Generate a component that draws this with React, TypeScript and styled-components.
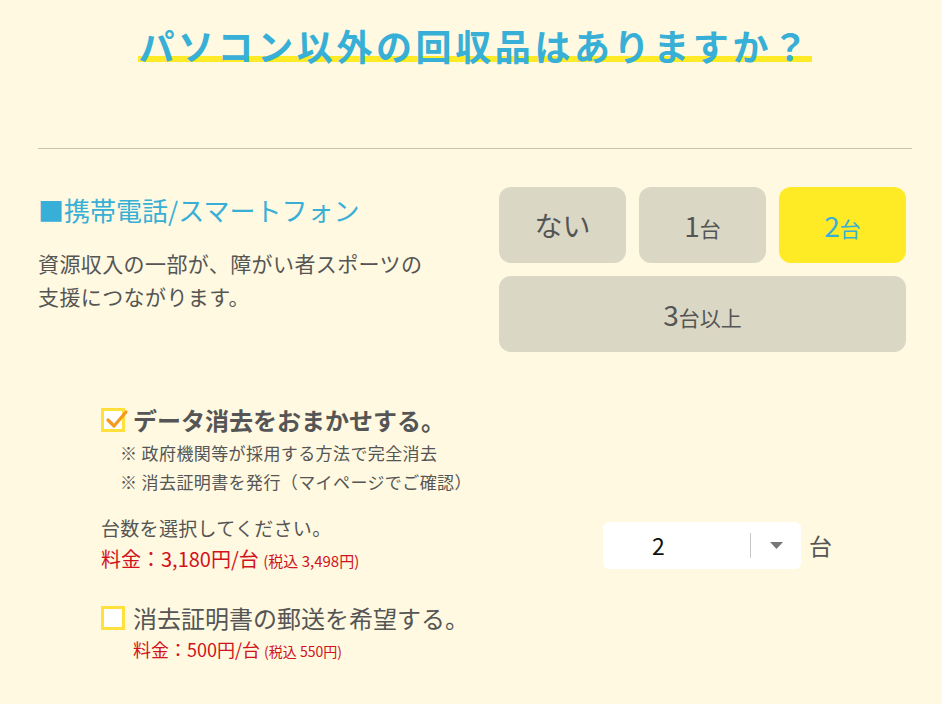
import { useState } from 'react'
import styled, { createGlobalStyle } from 'styled-components'

const colors = {
  bg: '#fef9e0',
  text: '#555555',
  blue: '#38afd6',
  yellow: '#ffea26',
  box: '#dad8c5',
  line: '#c9c4ab',
  red: '#d2121c',
  check: '#f39a1e',
  boxBorder: '#ffe03c',
}

const GlobalStyle = createGlobalStyle`
  html, body {
    margin: 0;
    padding: 0;
    background: ${colors.bg};
    font-family: "Noto Sans CJK JP", "Noto Sans", sans-serif;
    color: ${colors.text};
  }
`

const Page = styled.div`
  padding: 0 30px 0 38px;
  width: 874px;
`

const TitleBar = styled.div`
  height: 149px;
  box-sizing: border-box;
  padding-top: 22px;
  border-bottom: 1px solid ${colors.line};
  text-align: center;
`

const Title = styled.h1`
  display: inline-block;
  margin: 0;
  font-size: 36px;
  line-height: 46px;
  font-weight: 700;
  letter-spacing: 3.6px;
  color: ${colors.blue};
  background: linear-gradient(${colors.yellow}, ${colors.yellow}) no-repeat;
  background-size: 100% 6px;
  background-position: 0 calc(100% - 6px);
`

const Section = styled.div`
  display: flex;
  justify-content: space-between;
  padding: 38px 5px 0 0;
`

const Info = styled.div`
  display: flex;
  flex-direction: column;
`

const Heading = styled.h2`
  margin: 0;
  padding-top: 5px;
  font-size: 26px;
  line-height: 36px;
  font-weight: 400;
  color: ${colors.blue};
`

const Desc = styled.p`
  margin: 19px 0 0;
  font-size: 21px;
  line-height: 33px;
  letter-spacing: 0.4px;
`

const Choices = styled.div`
  display: grid;
  grid-template-columns: repeat(3, 127px);
  grid-auto-rows: 76px;
  column-gap: 13px;
  row-gap: 13px;
  width: 408px;
`

const Choice = styled.button<{ $selected?: boolean; $wide?: boolean }>`
  grid-column: ${({ $wide }) => ($wide ? '1 / -1' : 'auto')};
  border: none;
  border-radius: 12px;
  background: ${({ $selected }) => ($selected ? colors.yellow : colors.box)};
  color: ${({ $selected }) => ($selected ? colors.blue : colors.text)};
  font-family: inherit;
  font-size: 28px;
  cursor: pointer;
  display: flex;
  align-items: center;
  justify-content: center;
`

const Unit = styled.span`
  font-size: 21px;
  margin-top: 5px;
`

const Options = styled.div`
  display: flex;
  flex-direction: column;
  padding: 52px 0 0 63px;
`

const CheckRow = styled.label`
  display: flex;
  align-items: center;
  gap: 8px;
  cursor: pointer;
`

const Box = styled.span`
  position: relative;
  width: 24px;
  height: 24px;
  box-sizing: border-box;
  border: 3px solid ${colors.boxBorder};
  background: #fff;
  flex-shrink: 0;
`

const Tick = styled.svg`
  position: absolute;
  left: 1px;
  top: -4px;
`

const CheckLabel = styled.span<{ $bold?: boolean }>`
  font-size: 24px;
  line-height: 32px;
  font-weight: ${({ $bold }) => ($bold ? 700 : 400)};
`

const Notes = styled.ul`
  list-style: none;
  margin: 2px 0 0 19px;
  padding: 0;
  font-size: 17px;
  line-height: 29px;
  letter-spacing: 0.4px;
`

const CountRow = styled.div`
  display: flex;
  align-items: center;
  margin-top: 17px;
  width: 731px;
`

const CountText = styled.div`
  flex: 1;
`

const Prompt = styled.div`
  font-size: 19px;
  line-height: 30px;
  letter-spacing: 0.3px;
`

const Price = styled.div<{ $small?: boolean }>`
  color: ${colors.red};
  font-size: ${({ $small }) => ($small ? '18px' : '20px')};
  line-height: ${({ $small }) => ($small ? '30px' : '32px')};
`

const Tax = styled.span<{ $small?: boolean }>`
  font-size: ${({ $small }) => ($small ? '14px' : '15px')};
`

const SelectBox = styled.div`
  display: flex;
  align-items: center;
  width: 198px;
  height: 47px;
  background: #fff;
  border-radius: 6px;
`

const SelectValue = styled.span`
  flex: 1;
  padding-left: 49px;
  font-size: 23px;
  color: #111;
`

const SelectArrow = styled.span`
  display: flex;
  align-items: center;
  justify-content: center;
  width: 50px;
  height: 25px;
  border-left: 1px solid #c8c8c8;
`

const After = styled.span`
  font-size: 23px;
  margin-left: 8px;
`

const SecondRow = styled.div`
  margin-top: 25px;
  display: flex;
  flex-direction: column;
`

const SubPrice = styled.div`
  padding-left: 32px;
`

export default function App() {
  const [selected, setSelected] = useState(2)
  return (
    <Page>
      <GlobalStyle />
      <TitleBar>
        <Title>パソコン以外の回収品はありますか？</Title>
      </TitleBar>
      <Section>
        <Info>
          <Heading>■携帯電話/スマートフォン</Heading>
          <Desc>
            資源収入の一部が、障がい者スポーツの
            <br />
            支援につながります。
          </Desc>
        </Info>
        <Choices>
          <Choice $selected={selected === 0} onClick={() => setSelected(0)}>ない</Choice>
          <Choice $selected={selected === 1} onClick={() => setSelected(1)}>1<Unit>台</Unit></Choice>
          <Choice $selected={selected === 2} onClick={() => setSelected(2)}>2<Unit>台</Unit></Choice>
          <Choice $wide $selected={selected === 3} onClick={() => setSelected(3)}>3<Unit>台以上</Unit></Choice>
        </Choices>
      </Section>
      <Options>
        <CheckRow>
          <Box>
            <Tick width="24" height="24" viewBox="0 0 24 24">
              <path d="M3 13 L9 19 L21 5" fill="none" stroke={colors.check} strokeWidth="3.2" strokeLinecap="round" strokeLinejoin="round" />
            </Tick>
          </Box>
          <CheckLabel $bold>データ消去をおまかせする。</CheckLabel>
        </CheckRow>
        <Notes>
          <li>※ 政府機関等が採用する方法で完全消去</li>
          <li>※ 消去証明書を発行（マイページでご確認）</li>
        </Notes>
        <CountRow>
          <CountText>
            <Prompt>台数を選択してください。</Prompt>
            <Price>料金：3,180円/台 <Tax>(税込 3,498円)</Tax></Price>
          </CountText>
          <SelectBox>
            <SelectValue>{selected}</SelectValue>
            <SelectArrow>
              <svg width="13" height="7" viewBox="0 0 13 7">
                <path d="M0 0 H13 L6.5 7 Z" fill="#777" />
              </svg>
            </SelectArrow>
          </SelectBox>
          <After>台</After>
        </CountRow>
        <SecondRow>
          <CheckRow>
            <Box />
            <CheckLabel>消去証明書の郵送を希望する。</CheckLabel>
          </CheckRow>
          <SubPrice>
            <Price $small>料金：500円/台 <Tax $small>(税込 550円)</Tax></Price>
          </SubPrice>
        </SecondRow>
      </Options>
    </Page>
  )
}
